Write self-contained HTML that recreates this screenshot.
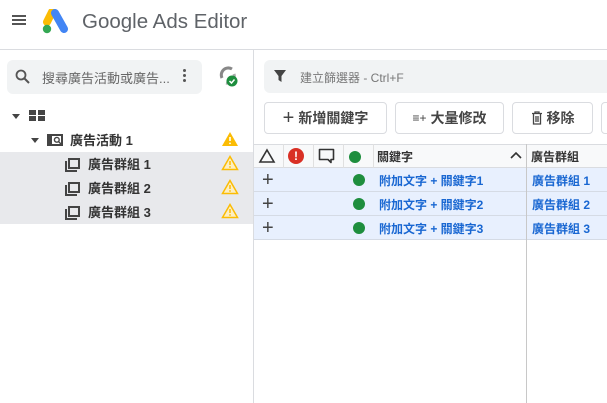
<!DOCTYPE html><html><head><meta charset="utf-8"><style>
*{box-sizing:border-box;margin:0;padding:0}
body{width:607px;height:403px;overflow:hidden;background:#fff;font-family:"Liberation Sans","Noto Sans CJK TC",sans-serif;position:relative;color:#333}
.a{position:absolute}
.bt{position:absolute;top:102px;height:32px;border:1px solid #dadce0;border-radius:4px;background:#fff;font-size:14px;font-weight:bold;color:#444;display:flex;align-items:center;justify-content:center;gap:4px}
.row{position:absolute;left:0;width:253px;height:24px;font-size:13px;font-weight:bold;color:#333;display:flex;align-items:center}
.tr{position:absolute;left:254px;width:353px;height:24px;background:#e8f0fe;border-bottom:1px solid #d5dbe5}
.cell{position:absolute;top:0;height:24px;display:flex;align-items:center}
.blue{color:#1967d2;font-size:12px;font-weight:bold}
.dot{width:12px;height:12px;border-radius:50%;background:#1e8e3e}
</style></head><body>
<!-- header -->
<div class="a" style="left:12px;top:15px;width:14px;height:2px;background:#555;box-shadow:0 4px 0 #555,0 8px 0 #555"></div>
<svg class="a" style="left:42px;top:9px" width="28" height="26" viewBox="0 0 28 26"><path d="M10 3 L5 13" stroke="#fbbc04" stroke-width="8" stroke-linecap="round"/><path d="M13 4 L22 20" stroke="#4285f4" stroke-width="8" stroke-linecap="round"/><circle cx="5" cy="20" r="4.2" fill="#34a853"/></svg>
<div class="a" style="left:82px;top:10px;font-size:20.5px;color:#5f6368">Google Ads Editor</div>
<div class="a" style="left:0;top:49px;width:607px;height:1px;background:#dadce0"></div>
<div class="a" style="left:253px;top:49px;width:1px;height:354px;background:#dadce0"></div>
<!-- left -->
<div class="a" style="left:7px;top:60px;width:195px;height:34px;background:#f1f3f4;border-radius:6px"></div>
<svg class="a" style="left:15px;top:69px" width="16" height="16"><circle cx="6" cy="6" r="4.5" stroke="#555" stroke-width="1.8" fill="none"/><path d="M9.5 9.5L14 14" stroke="#555" stroke-width="2"/></svg>
<div class="a" style="left:42px;top:68px;font-size:13px;color:#666">搜尋廣告活動或廣告...</div>
<div class="a" style="left:183px;top:69px;width:3px;height:3px;background:#555;border-radius:50%;box-shadow:0 5px 0 #555,0 10px 0 #555"></div>
<svg class="a" style="left:216px;top:64px" width="24" height="24"><path d="M6 14a7 7 0 0 1 10-9" stroke="#888" stroke-width="3" fill="none"/><path d="M18 10a7 7 0 0 1-8 9" stroke="#aaa" stroke-width="3" fill="none"/><circle cx="16" cy="17" r="5.5" fill="#1e8e3e"/><path d="M13.5 17l2 2 3-3.5" stroke="#fff" stroke-width="1.5" fill="none"/></svg>
<div class="a" style="left:12px;top:114px;border:4px solid transparent;border-top:5px solid #444;border-bottom:0"></div>
<div class="a" style="left:29px;top:110px;width:7px;height:5px;background:#444;box-shadow:9px 0 0 #444,0 6px 0 #444,9px 6px 0 #444"></div>
<div class="a" style="left:0;top:152px;width:253px;height:72px;background:#e8e9ec"></div>
<div class="a" style="left:31px;top:138px;border:4px solid transparent;border-top:5px solid #444;border-bottom:0"></div>
<div class="a" style="left:47px;top:134px;width:16px;height:12px;border:2px solid #444;border-left-width:5px"></div>
<svg class="a" style="left:53px;top:136px" width="9" height="9"><circle cx="3.8" cy="3.8" r="2.4" stroke="#444" stroke-width="1.4" fill="none"/><path d="M5.5 5.5L8 8" stroke="#444" stroke-width="1.4"/></svg>
<div class="row" style="top:128px"><span class="a" style="left:70px;top:2px">廣告活動 1</span></div>
<svg class="a" style="left:221px;top:131px" width="18" height="16"><path d="M9 1L17 15H1Z" fill="#fbbc04"/><path d="M9 6v4" stroke="#fff" stroke-width="1.6"/><circle cx="9" cy="12.4" r=".9" fill="#fff"/></svg>
<div class="row" style="top:152px"><span class="a" style="left:88px;top:2px">廣告群組 1</span></div>
<div class="row" style="top:176px"><span class="a" style="left:88px;top:2px">廣告群組 2</span></div>
<div class="row" style="top:200px"><span class="a" style="left:88px;top:2px">廣告群組 3</span></div>
<div class="a" style="left:65px;top:158px"><div class="a" style="left:0;top:3px;width:12px;height:11px;border-left:2px solid #444;border-bottom:2px solid #444"></div><div class="a" style="left:3px;top:0;width:12px;height:11px;border:2px solid #444"></div></div>
<div class="a" style="left:65px;top:182px"><div class="a" style="left:0;top:3px;width:12px;height:11px;border-left:2px solid #444;border-bottom:2px solid #444"></div><div class="a" style="left:3px;top:0;width:12px;height:11px;border:2px solid #444"></div></div>
<div class="a" style="left:65px;top:206px"><div class="a" style="left:0;top:3px;width:12px;height:11px;border-left:2px solid #444;border-bottom:2px solid #444"></div><div class="a" style="left:3px;top:0;width:12px;height:11px;border:2px solid #444"></div></div>
<svg class="a" style="left:221px;top:155px" width="18" height="16"><path d="M9 1.5L16.5 14.5H1.5Z" fill="#fdefc3" stroke="#fbbc04" stroke-width="1.5"/><path d="M9 6v4" stroke="#fbbc04" stroke-width="1.5"/><circle cx="9" cy="12" r=".9" fill="#fbbc04"/></svg>
<svg class="a" style="left:221px;top:179px" width="18" height="16"><path d="M9 1.5L16.5 14.5H1.5Z" fill="#fdefc3" stroke="#fbbc04" stroke-width="1.5"/><path d="M9 6v4" stroke="#fbbc04" stroke-width="1.5"/><circle cx="9" cy="12" r=".9" fill="#fbbc04"/></svg>
<svg class="a" style="left:221px;top:203px" width="18" height="16"><path d="M9 1.5L16.5 14.5H1.5Z" fill="#fdefc3" stroke="#fbbc04" stroke-width="1.5"/><path d="M9 6v4" stroke="#fbbc04" stroke-width="1.5"/><circle cx="9" cy="12" r=".9" fill="#fbbc04"/></svg>
<!-- right -->
<div class="a" style="left:264px;top:60px;width:343px;height:33px;background:#f1f3f4;border-radius:6px 0 0 6px"></div>
<svg class="a" style="left:273px;top:69px" width="14" height="14"><path d="M1 1H13L8.5 7V13L5.5 11V7Z" fill="#444"/></svg>
<div class="a" style="left:300px;top:69px;font-size:12px;color:#777">建立篩選器 - Ctrl+F</div>
<div class="bt" style="left:264px;width:123px"><span style="font-size:20px;font-weight:normal;line-height:1">+</span>新增關鍵字</div>
<div class="bt" style="left:395px;width:109px"><span style="font-size:12px;font-weight:normal">≡+</span>大量修改</div>
<div class="bt" style="left:512px;width:81px"><svg width="12" height="14"><path d="M1 2.5H11M4 2.5V1H8V2.5M2.5 3V13H9.5V3M5 5V11M7 5V11" stroke="#444" stroke-width="1.3" fill="none"/></svg>移除</div>
<div class="bt" style="left:601px;width:20px"></div>
<div class="a" style="left:254px;top:144px;width:353px;height:24px;background:#f8f9fa;border-top:1px solid #dadce0;border-bottom:1px solid #dadce0"></div>
<svg class="a" style="left:258px;top:148px" width="18" height="16"><path d="M9 2L16 14H2Z" stroke="#333" stroke-width="1.6" fill="none"/></svg>
<div class="a" style="left:288px;top:148px;width:16px;height:16px;border-radius:50%;background:#d93025;color:#fff;font-size:12px;font-weight:bold;text-align:center;line-height:16px">!</div>
<svg class="a" style="left:318px;top:148px" width="18" height="17"><path d="M1.5 1.5H15.5V11.5H13V14.5L10 11.5H1.5Z" stroke="#333" stroke-width="1.6" fill="none" stroke-linejoin="round"/></svg>
<div class="a dot" style="left:349px;top:151px"></div>
<div class="a" style="left:377px;top:148px;font-size:12px;font-weight:bold;color:#333">關鍵字</div>
<svg class="a" style="left:510px;top:151px" width="12" height="8"><path d="M1 7L6 2L11 7" stroke="#333" stroke-width="1.6" fill="none"/></svg>
<div class="a" style="left:531px;top:148px;font-size:12px;font-weight:bold;color:#333">廣告群組</div>
<div class="a" style="left:283px;top:144px;width:1px;height:24px;background:#e0e0e0"></div>
<div class="a" style="left:313px;top:144px;width:1px;height:24px;background:#e0e0e0"></div>
<div class="a" style="left:343px;top:144px;width:1px;height:24px;background:#e0e0e0"></div>
<div class="a" style="left:373px;top:144px;width:1px;height:24px;background:#e0e0e0"></div>
<div class="tr" style="top:168px"><div class="cell" style="left:8px;font-size:20px;color:#444">+</div><div class="cell" style="left:99px"><div class="dot"></div></div><div class="cell blue" style="left:125px">附加文字 + 關鍵字1</div><div class="cell blue" style="left:278px">廣告群組 1</div></div>
<div class="tr" style="top:192px"><div class="cell" style="left:8px;font-size:20px;color:#444">+</div><div class="cell" style="left:99px"><div class="dot"></div></div><div class="cell blue" style="left:125px">附加文字 + 關鍵字2</div><div class="cell blue" style="left:278px">廣告群組 2</div></div>
<div class="tr" style="top:216px"><div class="cell" style="left:8px;font-size:20px;color:#444">+</div><div class="cell" style="left:99px"><div class="dot"></div></div><div class="cell blue" style="left:125px">附加文字 + 關鍵字3</div><div class="cell blue" style="left:278px">廣告群組 3</div></div>
<div class="a" style="left:526px;top:144px;width:1px;height:259px;background:#c8c8c8"></div>
</body></html>
